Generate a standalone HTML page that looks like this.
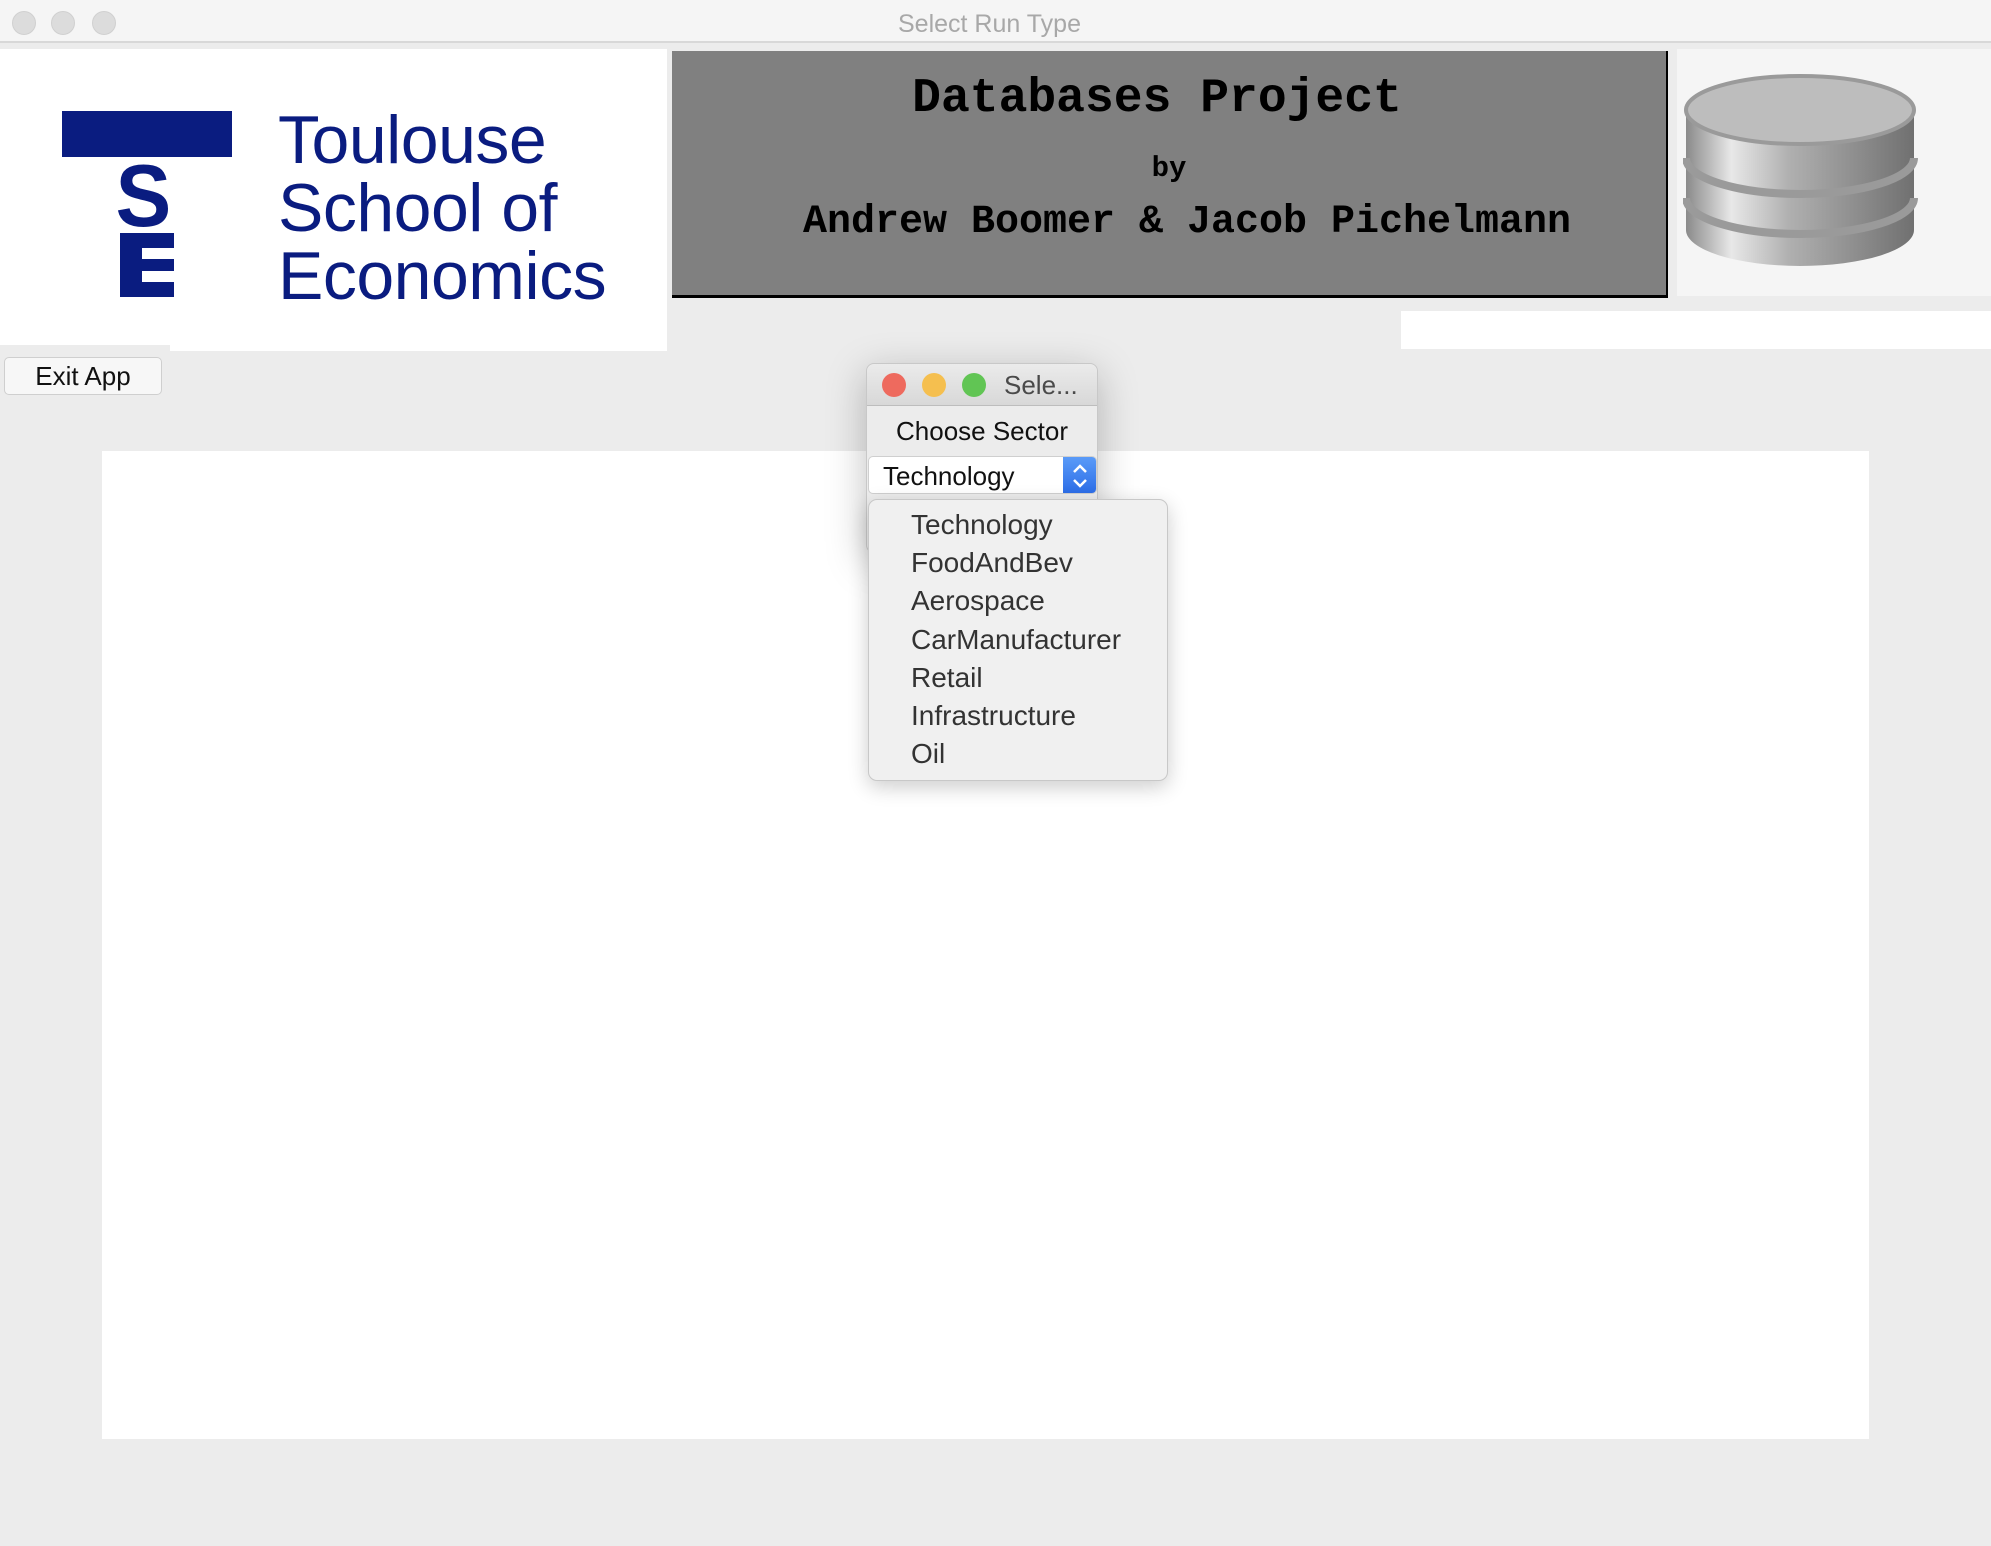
<!DOCTYPE html>
<html><head><meta charset="utf-8"><style>
*{margin:0;padding:0;box-sizing:border-box}
body{width:1991px;height:1546px;background:#ececec;position:relative;overflow:hidden;font-family:"Liberation Sans",sans-serif}
.a{position:absolute}
.mono{font-family:"Liberation Mono",monospace;font-weight:bold;color:#000;white-space:nowrap}
</style></head><body>
<div class="a" style="left:0;top:0;width:1991px;height:43px;background:#f5f5f5;border-bottom:2px solid #d8d8d8"></div>
<div class="a" style="left:12px;top:11px;width:24px;height:24px;border-radius:50%;background:#dcdcdc;border:1px solid #d0d0d0"></div>
<div class="a" style="left:51px;top:11px;width:24px;height:24px;border-radius:50%;background:#dcdcdc;border:1px solid #d0d0d0"></div>
<div class="a" style="left:92px;top:11px;width:24px;height:24px;border-radius:50%;background:#dcdcdc;border:1px solid #d0d0d0"></div>
<div class="a" style="left:898px;top:10px;font-size:25px;color:#a8a8a8">Select Run Type</div>

<div class="a" style="left:0;top:49px;width:170px;height:296px;background:#fff"></div>
<div class="a" style="left:170px;top:49px;width:497px;height:302px;background:#fff"></div>
<div class="a" style="left:62px;top:111px;width:170px;height:46px;background:#0a1c80"></div>
<div class="a" style="left:114px;top:161px;font-size:88px;font-weight:bold;color:#0a1c80;line-height:70px;transform:scaleX(0.95)">S</div>
<div class="a" style="left:120px;top:233px;width:54px;height:64px;background:#0a1c80"></div>
<div class="a" style="left:142px;top:248px;width:32px;height:11px;background:#fff"></div>
<div class="a" style="left:142px;top:271px;width:32px;height:11px;background:#fff"></div>
<div class="a" style="left:278px;top:106px;font-size:68px;line-height:68px;color:#0a1c80;letter-spacing:-0.5px">Toulouse<br>School of<br>Economics</div>

<div class="a" style="left:672px;top:51px;width:996px;height:247px;background:#808080;border-right:2px solid #000;border-bottom:3px solid #000"></div>
<div class="a mono" style="left:660px;top:72px;width:994px;text-align:center;font-size:48px">Databases Project</div>
<div class="a mono" style="left:672px;top:152px;width:994px;text-align:center;font-size:29px">by</div>
<div class="a mono" style="left:690px;top:200px;width:994px;text-align:center;font-size:40px">Andrew Boomer &amp; Jacob Pichelmann</div>

<div class="a" style="left:1677px;top:49px;width:314px;height:247px;background:#f5f5f5"></div>
<svg class="a" style="left:1683px;top:72px" width="236" height="200" viewBox="0 0 236 200">
<defs><linearGradient id="g" x1="0" x2="1"><stop offset="0" stop-color="#8a8a8a"/><stop offset="0.2" stop-color="#e8e8e8"/><stop offset="0.45" stop-color="#b0b0b0"/><stop offset="1" stop-color="#707070"/></linearGradient></defs>
<path d="M3 38 V158 A114 36 0 0 0 231 158 V38 Z" fill="url(#g)"/>
<path d="M3 86 A114 36 0 0 0 231 86" fill="none" stroke="#9a9a9a" stroke-width="8"/>
<path d="M3 126 A114 36 0 0 0 231 126" fill="none" stroke="#9a9a9a" stroke-width="8"/>
<ellipse cx="117" cy="38" rx="114" ry="34" fill="#bdbdbd" stroke="#9a9a9a" stroke-width="4"/>
</svg>
<div class="a" style="left:1401px;top:311px;width:590px;height:38px;background:#fff"></div>

<div class="a" style="left:4px;top:357px;width:158px;height:38px;background:#f7f7f7;border:1px solid #cfcfcf;border-radius:5px;font-size:26px;line-height:36px;text-align:center;color:#111">Exit App</div>

<div class="a" style="left:102px;top:451px;width:1767px;height:988px;background:#fff"></div>

<div class="a" style="left:866px;top:363px;width:232px;height:190px;background:#ececec;border:1px solid #c8c8c8;border-radius:8px;box-shadow:0 10px 40px rgba(0,0,0,0.25)"></div>
<div class="a" style="left:867px;top:364px;width:230px;height:42px;background:linear-gradient(#ebebeb,#d8d8d8);border-bottom:1px solid #bdbdbd;border-radius:8px 8px 0 0"></div>
<div class="a" style="left:882px;top:373px;width:24px;height:24px;border-radius:50%;background:#ee6a5e"></div>
<div class="a" style="left:922px;top:373px;width:24px;height:24px;border-radius:50%;background:#f5bf4f"></div>
<div class="a" style="left:962px;top:373px;width:24px;height:24px;border-radius:50%;background:#61c554"></div>
<div class="a" style="left:1004px;top:370px;font-size:26px;color:#4a4a4a">Sele...</div>
<div class="a" style="left:866px;top:416px;width:232px;text-align:center;font-size:26px;color:#111">Choose Sector</div>
<div class="a" style="left:868px;top:456px;width:229px;height:38px;background:#fff;border:1px solid #cfcfcf;border-radius:5px;overflow:hidden">
<div class="a" style="left:14px;top:4px;font-size:26px;color:#111">Technology</div>
<div class="a" style="right:0;top:0;width:33px;height:38px;background:linear-gradient(#5a9bf8,#2a6be6)"></div>
<svg class="a" style="right:6px;top:6px" width="20" height="26" viewBox="0 0 20 26"><path d="M4 9 L10 3 L16 9 M4 17 L10 23 L16 17" fill="none" stroke="#fff" stroke-width="2.5"/></svg>
</div>
<div class="a" style="left:868px;top:499px;width:300px;height:282px;background:#f0f0f0;border:1px solid #c8c8c8;border-radius:9px;box-shadow:0 6px 20px rgba(0,0,0,0.2)"></div>
<div class="a" style="left:911px;top:506px;font-size:28px;line-height:38.2px;color:#333">Technology<br>FoodAndBev<br>Aerospace<br>CarManufacturer<br>Retail<br>Infrastructure<br>Oil</div>
</body></html>
